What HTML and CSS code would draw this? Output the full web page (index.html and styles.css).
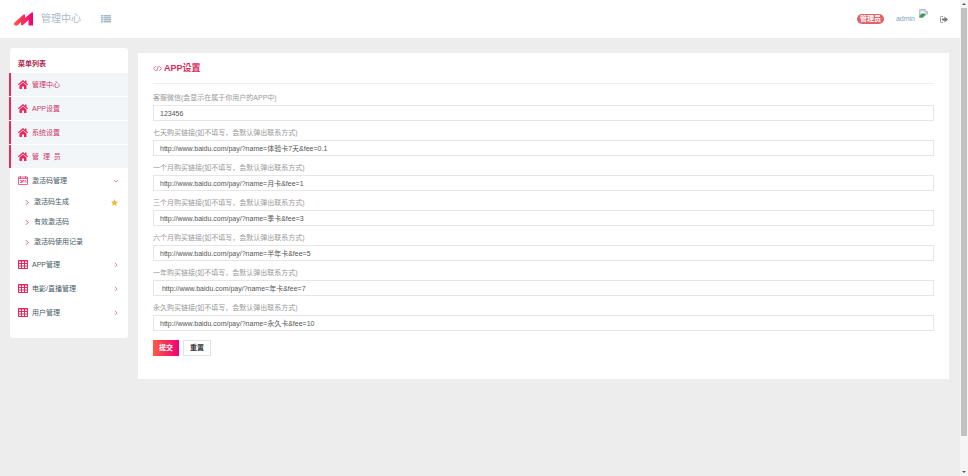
FILE: index.html
```html
<!DOCTYPE html>
<html lang="zh-CN">

<head>
    <meta charset="UTF-8">
    <meta name="viewport" content="width=device-width, initial-scale=1.0">
    <title>管理中心</title>
    <link rel="stylesheet" href="styles.css">
</head>

<body>
    <!-- shared icons -->
    <svg class="sprite" aria-hidden="true">
        <symbol id="home" viewBox="0 0 20 18">
            <path d="M10 0 0 8.500l1.500 2L10 3.500l8.500 7 1.500-2-3-2.500V1h-3v2.400z" />
            <path d="M10 5.200 3 11v7h5v-5h4v5h5v-7z" />
        </symbol>
        <symbol id="table" viewBox="0 0 20 18">
            <path fill-rule="evenodd" d="M1 0h18l1 1v16l-1 1H1l-1-1V1zM2 3v3h4V3zM8 3v3h4V3zM14 3v3h4V3zM2 8v3h4V8zM8 8v3h4V8zM14 8v3h4V8zM2 13v3h4v-3zM8 13v3h4v-3zM14 13v3h4v-3z" />
        </symbol>
        <symbol id="chevron" viewBox="0 0 10 16">
            <path d="M2 2l6 6-6 6" fill="none" stroke="currentColor" stroke-width="2" />
        </symbol>
    </svg>

    <div class="page">
        <header class="header">
            <a class="brand" href="#">
                <svg class="logo" viewBox="0 0 38 28" aria-hidden="true">
                    <defs>
                        <linearGradient id="logoFill">
                            <stop offset="0" stop-color="#ff5a45" />
                            <stop offset="1" stop-color="#f00078" />
                        </linearGradient>
                    </defs>
                    <path fill="url(#logoFill)" d="M1 21 18 6q4-3 4 1v5L34 2q4-3 4 1v24h-9V16L19 25q-5 4-5-1v-4l-6 6q-4 3-7 0-2-2 0-5z" />
                </svg>
                <span>管理中心</span>
            </a>
            <button class="toggle" type="button" aria-label="菜单">
                <svg viewBox="0 0 20 16" aria-hidden="true">
                    <path d="M0 0h4v3H0zM5 0h15v3H5zM0 4h4v3H0zM5 4h15v3H5zM0 8h4v3H0zM5 8h15v3H5zM0 12h4v3H0zM5 12h15v3H5z" />
                </svg>
            </button>
            <div class="user">
                <span class="badge">管理员</span>
                <a class="user-name" href="#">admin
                    <svg class="avatar" viewBox="0 0 16 16" aria-hidden="true">
                        <path d="M1 1h10l4 4v10H1z" fill="#c9dcf5" stroke="#9a9a9a" />
                        <path d="M11 1v4h4" fill="#fff" stroke="#9a9a9a" />
                        <path d="M3 7q0-2 2-2 2-2 4 0 2 0 2 2z" fill="#fff" />
                        <path d="M1 15v-3q6-7 11-2l-6 5z" fill="#3e9a4a" />
                        <path d="M7 16l9-7v7z" fill="#fff" />
                    </svg>
                </a>
                <a class="logout" href="#" aria-label="退出">
                    <svg viewBox="0 0 16 14" aria-hidden="true">
                        <path d="M6 1H3Q1 1 1 3v8q0 2 2 2h3" fill="none" stroke="currentColor" stroke-width="1.500" />
                        <path d="M4 5h5V1l7 6-7 6V9H4z" fill="currentColor" />
                    </svg>
                </a>
            </div>
        </header>

        <div class="content">
            <nav class="sidebar">
                <h2 class="menu-title">菜单列表</h2>
                <ul class="menu">
                    <li><a class="item active" href="#"><svg class="icon"><use href="#home" /></svg>管理中心</a></li>
                    <li><a class="item active" href="#"><svg class="icon"><use href="#home" /></svg>APP设置</a></li>
                    <li><a class="item active" href="#"><svg class="icon"><use href="#home" /></svg>系统设置</a></li>
                    <li><a class="item active" href="#"><svg class="icon"><use href="#home" /></svg>管&nbsp; 理&nbsp; 员</a></li>
                    <li class="open">
                        <a class="item" href="#">
                            <svg class="icon" viewBox="0 0 20 18">
                                <path d="M1 2h18v15H1zM1 5h18M5 0v4M15 0v4M4 9h3v4H4M9 13V9h3v4M14 9h2v4" fill="none" stroke="currentColor" stroke-width="1.500" />
                            </svg>激活码管理
                            <svg class="arrow down"><use href="#chevron" /></svg>
                        </a>
                        <ul class="submenu">
                            <li>
                                <a class="subitem" href="#"><svg class="bullet"><use href="#chevron" /></svg>激活码生成
                                    <svg class="star" viewBox="0 0 20 20"><path d="M10 0l3 7 7 .5-5.500 5L16 20l-6-4-6 4 1.500-7.500L0 7.500 7 7z" /></svg>
                                </a>
                            </li>
                            <li><a class="subitem" href="#"><svg class="bullet"><use href="#chevron" /></svg>有效激活码</a></li>
                            <li><a class="subitem" href="#"><svg class="bullet"><use href="#chevron" /></svg>激活码使用记录</a></li>
                        </ul>
                    </li>
                    <li><a class="item" href="#"><svg class="icon"><use href="#table" /></svg>APP管理<svg class="arrow"><use href="#chevron" /></svg></a></li>
                    <li><a class="item" href="#"><svg class="icon"><use href="#table" /></svg>电影/直播管理<svg class="arrow"><use href="#chevron" /></svg></a></li>
                    <li><a class="item" href="#"><svg class="icon"><use href="#table" /></svg>用户管理<svg class="arrow"><use href="#chevron" /></svg></a></li>
                </ul>
            </nav>

            <main class="panel">
                <h1 class="panel-title">
                    <svg viewBox="0 0 20 14" aria-hidden="true">
                        <path d="M6 2 1 7l5 5M14 2l5 5-5 5M12 1 8 13" fill="none" stroke="currentColor" stroke-width="1.500" />
                    </svg>APP设置
                </h1>
                <form>
                    <div class="field">
                        <label for="wechat">客服微信(会显示在属于你用户的APP中)</label>
                        <input type="text" id="wechat" name="wechat" value="123456">
                    </div>
                    <div class="field">
                        <label for="week">七天购买链接(如不填写，会默认弹出联系方式)</label>
                        <input type="text" id="week" name="week" value="http://www.baidu.com/pay/?name=体验卡7天&amp;fee=0.1">
                    </div>
                    <div class="field">
                        <label for="month">一个月购买链接(如不填写，会默认弹出联系方式)</label>
                        <input type="text" id="month" name="month" value="http://www.baidu.com/pay/?name=月卡&amp;fee=1">
                    </div>
                    <div class="field">
                        <label for="quarter">三个月购买链接(如不填写，会默认弹出联系方式)</label>
                        <input type="text" id="quarter" name="quarter" value="http://www.baidu.com/pay/?name=季卡&amp;fee=3">
                    </div>
                    <div class="field">
                        <label for="half">六个月购买链接(如不填写，会默认弹出联系方式)</label>
                        <input type="text" id="half" name="half" value="http://www.baidu.com/pay/?name=半年卡&amp;fee=5">
                    </div>
                    <div class="field">
                        <label for="year">一年购买链接(如不填写，会默认弹出联系方式)</label>
                        <input type="text" id="year" name="year" value=" http://www.baidu.com/pay/?name=年卡&amp;fee=7">
                    </div>
                    <div class="field">
                        <label for="forever">永久购买链接(如不填写，会默认弹出联系方式)</label>
                        <input type="text" id="forever" name="forever" value="http://www.baidu.com/pay/?name=永久卡&amp;fee=10">
                    </div>
                    <div class="buttons">
                        <button class="btn btn-primary" type="submit">提交</button>
                        <button class="btn" type="reset">重置</button>
                    </div>
                </form>
            </main>
        </div>
    </div>

    <div class="scrollbar" aria-hidden="true">
        <svg class="scroll-arrow" viewBox="0 0 8 8"><path d="M2 5l2-2 2 2z" /></svg>
        <div class="track">
            <div class="thumb"></div>
        </div>
        <svg class="scroll-arrow" viewBox="0 0 8 8"><path d="M2 3l2 2 2-2z" /></svg>
    </div>
</body>

</html>
```

FILE: styles.css
```css
* {
    box-sizing: border-box;
}

body {
    margin: 0;
    display: flex;
    min-height: 100vh;
    background-color: #ededed;
    color: #455a64;
    font-family: "Liberation Sans", Arial, "Noto Sans CJK SC", sans-serif;
    font-size: 7px;
    line-height: 12px;
}

a {
    color: inherit;
    text-decoration: none;
}

ul {
    list-style: none;
    margin: 0;
    padding: 0;
}

svg {
    flex: none;
}

.sprite {
    position: absolute;
    width: 0;
    height: 0;
}

.page {
    flex: 1;
    min-width: 0;
}

/* header */
.header {
    display: flex;
    align-items: center;
    height: 38px;
    padding: 0 12px 0 14px;
    background-color: #fff;
}

.brand {
    display: flex;
    align-items: center;
    gap: 8px;
    color: #a9bac7;
    font-size: 10px;
}

.logo {
    width: 19px;
    height: 14px;
}

.toggle {
    display: flex;
    margin-left: 20px;
    padding: 0;
    border: none;
    background: none;
    cursor: pointer;
}

.toggle svg {
    width: 10px;
    height: 8px;
    fill: #a9bac7;
}

.user {
    display: flex;
    align-items: center;
    gap: 12px;
    margin-left: auto;
}

.badge {
    padding: 0 3px;
    border-radius: 5px;
    background-color: #e0626b;
    color: #fff;
    font-weight: bold;
    line-height: 10px;
}

.user-name {
    display: flex;
    align-items: center;
    gap: 4px;
    color: #7ba7c0;
}

.avatar {
    width: 9px;
    height: 9px;
    margin-bottom: 12px;
}

.logout {
    display: flex;
    color: #777;
}

.logout svg {
    width: 8px;
    height: 7px;
}

.content {
    display: flex;
    align-items: flex-start;
    gap: 10px;
    padding: 10px 11px 10px 10px;
}

/* sidebar */
.sidebar {
    width: 118px;
    padding: 10px 0 14px;
    border-radius: 3px;
    background-color: #fff;
}

.menu-title {
    margin: 0 0 3px;
    padding-left: 8px;
    color: #b0254f;
    font-size: 7px;
    line-height: 12px;
}

.menu {
    display: flex;
    flex-direction: column;
    gap: 1px;
}

.item,
.subitem {
    display: flex;
    align-items: center;
    padding: 0 10px 0 8px;
}

.item {
    height: 23px;
    gap: 4px;
}

.item.active {
    margin-left: -1px;
    padding-left: 7px;
    border-left: 2px solid #ec2b5d;
    background-color: #f2f6f9;
    color: #cb3a68;
}

.icon {
    width: 10px;
    height: 9px;
    color: #e03363;
    fill: #e8285c;
}

.arrow {
    width: 4px;
    height: 6px;
    margin-left: auto;
    color: #d9607f;
}

.arrow.down {
    transform: rotate(90deg);
}

.subitem {
    height: 20px;
    gap: 5px;
    padding-left: 15px;
}

.bullet {
    width: 4px;
    height: 7px;
    color: #cb3a68;
}

.star {
    width: 7px;
    height: 7px;
    margin-left: auto;
    fill: #f7b731;
}

/* settings form */
.panel {
    flex: 1;
    min-width: 0;
    margin-top: 5px;
    padding: 8px 15px 23px;
    background-color: #fff;
}

.panel-title {
    display: flex;
    align-items: center;
    gap: 2px;
    margin: 0 0 7px;
    padding-bottom: 7px;
    border-bottom: 1px solid #eee;
    color: #d92c5f;
    font-size: 9px;
    line-height: 15px;
}

.panel-title svg {
    width: 9px;
    height: 7px;
}

.field {
    margin-bottom: 5px;
}

.field label {
    display: block;
    color: #999;
    line-height: 14px;
}

.field input {
    display: block;
    width: 100%;
    height: 16px;
    padding: 0 6px;
    border: 1px solid #e6e6e6;
    background-color: #fff;
    color: #555;
    font: inherit;
}

.buttons {
    display: flex;
    gap: 4px;
    padding-top: 4px;
}

.btn {
    height: 16px;
    padding: 0 6px;
    border: 1px solid #e2e2e2;
    background-color: #fff;
    color: #333;
    font: inherit;
    font-weight: bold;
    line-height: 14px;
    cursor: pointer;
}

.btn-primary {
    border: none;
    background-image: linear-gradient(to right, #ff5a45, #f00078);
    color: #fff;
}

/* scrollbar */
.scrollbar {
    position: sticky;
    top: 0;
    display: flex;
    flex-direction: column;
    width: 8px;
    height: 100vh;
    background-color: #f5f5f5;
}

.scroll-arrow {
    width: 8px;
    height: 8px;
    fill: #555;
}

.track {
    flex: 1;
    padding: 0 1px;
}

.thumb {
    height: 93%;
    background-color: #c1c1c1;
}
```
